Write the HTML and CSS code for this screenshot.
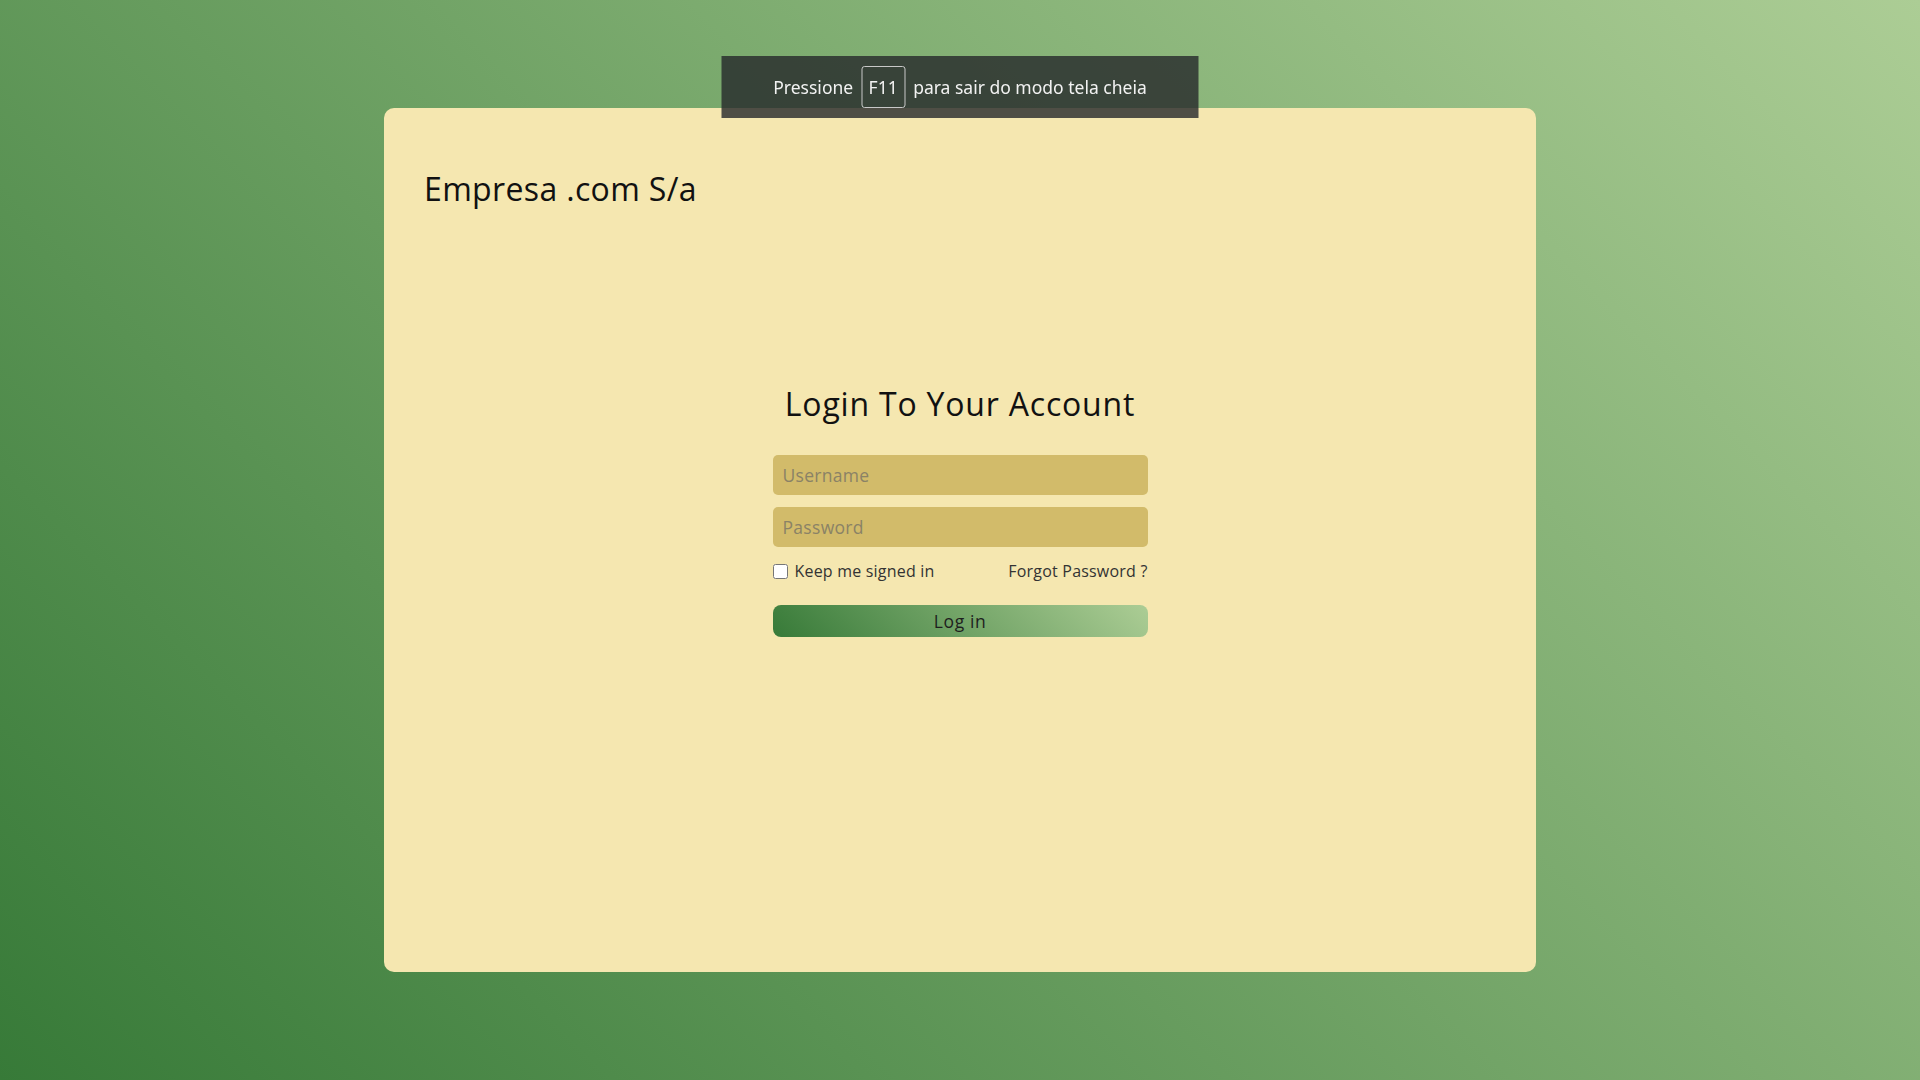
FILE: index.html
```html
<!DOCTYPE html>
<html lang="pt-BR">
<head>
<meta charset="utf-8">
<title>Empresa .com S/a - Login</title>
<link rel="stylesheet" href="styles.css">
</head>
<body>
  <div class="fs-notice">
    <span>Pressione</span>
    <span class="fs-key">F11</span>
    <span>para sair do modo tela cheia</span>
  </div>
  <main class="card">
    <h1 class="brand">Empresa .com S/a</h1>
    <section class="login">
      <h2 class="login-title">Login To Your Account</h2>
      <form class="login-form">
        <input class="field" type="text" placeholder="Username">
        <input class="field" type="password" placeholder="Password">
        <div class="options">
          <label class="remember"><input type="checkbox" class="check"> Keep me signed in</label>
          <a class="forgot" href="#">Forgot Password ?</a>
        </div>
        <button class="btn" type="button">Log in</button>
      </form>
    </section>
  </main>
</body>
</html>
```

FILE: styles.css
```css
html, body {
  margin: 0;
  height: 100%;
}

body {
  background: linear-gradient(45deg, #377a38 0%, #accd95 100%);
  display: flex;
  align-items: center;
  justify-content: center;
  font-family: "Open Sans", "Liberation Sans", sans-serif;
  color: #111;
}

.card {
  box-sizing: border-box;
  width: 60vw;
  height: 80vh;
  background: #f5e7b0;
  border-radius: 10px;
  padding: 40px;
}

.brand {
  margin: 21px 0 0;
  font-size: 32px;
  font-weight: 500;
  letter-spacing: 0.35px;
  line-height: 40px;
  color: #111;
}

.login {
  width: 375px;
  margin: 175px auto 0;
}

.login-title {
  margin: 0 0 31px;
  text-align: center;
  font-size: 32px;
  font-weight: 400;
  letter-spacing: 0.8px;
  line-height: 40px;
  color: #111;
}

.login-form {
  display: flex;
  flex-direction: column;
}

.field {
  box-sizing: border-box;
  height: 40px;
  width: 100%;
  border: none;
  border-radius: 5px;
  background: #d2bb6a;
  padding: 0 10px;
  font-family: "Open Sans", "Liberation Sans", sans-serif;
  font-size: 17.5px;
  letter-spacing: 0.3px;
  color: #222;
  outline: none;
}

.field + .field {
  margin-top: 12px;
}

.field::placeholder {
  color: #8a8266;
}

.options {
  display: flex;
  justify-content: space-between;
  align-items: center;
  margin-top: 13px;
  font-size: 16px;
  letter-spacing: 0.2px;
  color: #333;
}

.remember {
  display: flex;
  align-items: center;
  gap: 7px;
}

.check {
  margin: 0;
  width: 15px;
  height: 15px;
}

.forgot {
  color: #333;
  text-decoration: none;
}

.btn {
  margin-top: 23px;
  height: 32px;
  width: 100%;
  border: none;
  border-radius: 8px;
  background: linear-gradient(45deg, #377a38 0%, #accd95 100%);
  font-family: "Open Sans", "Liberation Sans", sans-serif;
  font-size: 17.5px;
  letter-spacing: 0.6px;
  color: #1e1e1e;
  cursor: pointer;
}

.fs-notice {
  position: fixed;
  top: 56px;
  left: 50%;
  transform: translateX(-50%);
  width: 477px;
  height: 62px;
  box-sizing: border-box;
  background: rgba(38, 40, 42, 0.8);
  display: flex;
  align-items: center;
  justify-content: center;
  gap: 8px;
  font-family: "Noto Sans", "Open Sans", sans-serif;
  font-size: 17.5px;
  color: #f2f2f2;
  z-index: 10;
}

.fs-key {
  box-sizing: border-box;
  width: 44px;
  height: 42px;
  border: 1px solid #c8c8c8;
  border-radius: 3px;
  display: flex;
  align-items: center;
  justify-content: center;
}
```
